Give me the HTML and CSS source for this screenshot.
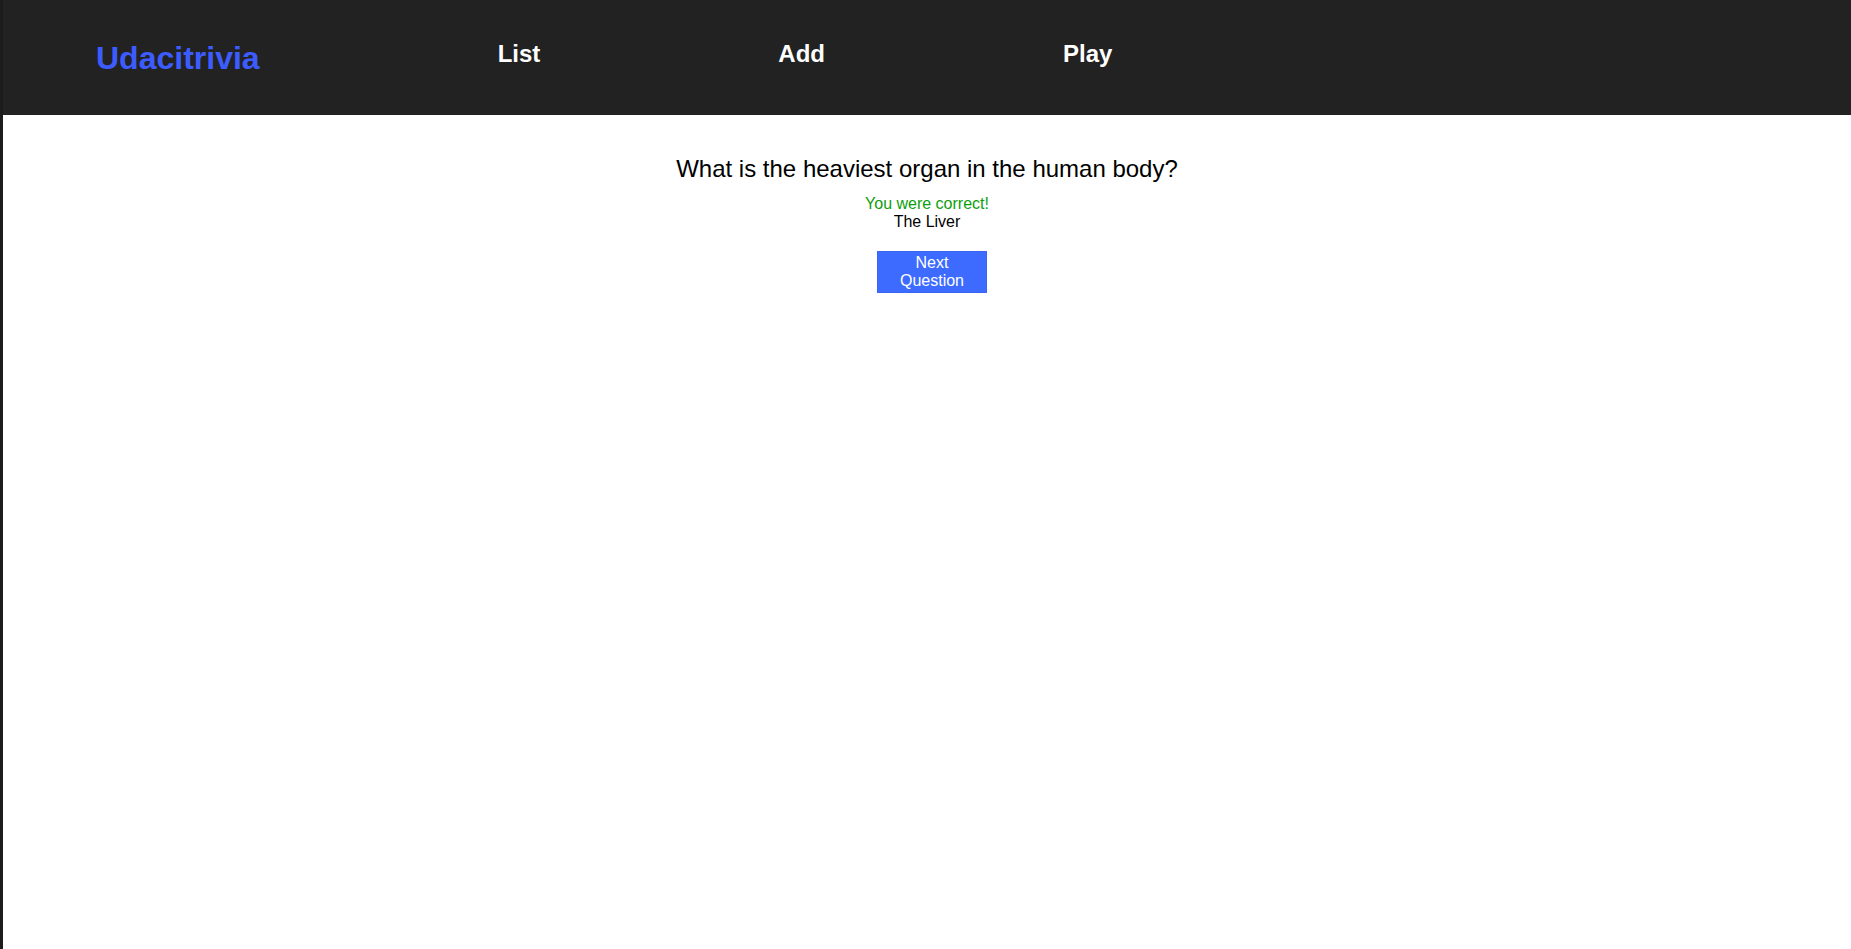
FILE: index.html
```html
<!DOCTYPE html>
<html lang="en">
<head>
<meta charset="utf-8">
<title>Udacitrivia</title>
<link rel="stylesheet" href="styles.css">
</head>
<body>
<div class="app">
  <header class="header">
    <h1 class="logo">Udacitrivia</h1>
    <nav class="nav">
      <h2 class="nav-item">List</h2>
      <h2 class="nav-item">Add</h2>
      <h2 class="nav-item">Play</h2>
    </nav>
  </header>
  <main class="content">
    <div class="quiz-play-holder">
      <div class="quiz-question">What is the heaviest organ in the human body?</div>
      <div class="quiz-answer correct">You were correct!</div>
      <div class="quiz-answer">The Liver</div>
      <button class="next-question">Next Question</button>
    </div>
  </main>
</div>
</body>
</html>
```
FILE: styles.css
```css
html, body {
  margin: 0;
  padding: 0;
  height: 100%;
}
body {
  background: #1c1c1c;
  font-family: "Liberation Sans", Arial, sans-serif;
  color: #000;
}
.app {
  margin-left: 3px;
  min-height: 100%;
  display: flex;
  flex-direction: column;
  background: #fff;
}
.header {
  height: 115px;
  box-sizing: border-box;
  background: #222222;
  display: flex;
  align-items: flex-start;
  padding: 40px 0 0 93px;
  gap: 238px;
}
.logo {
  margin: 0;
  font-size: 32px;
  font-weight: bold;
  color: #3d5cff;
}
.nav {
  display: flex;
  align-items: flex-start;
  gap: 238px;
}
.nav-item {
  margin: 0;
  font-size: 24px;
  font-weight: bold;
  color: #fff;
}
.content {
  flex: 1;
  background: #fff;
  padding: 40px 0 0 0;
}
.quiz-play-holder {
  display: flex;
  flex-direction: column;
  align-items: center;
  text-align: center;
}
.quiz-question {
  font-size: 24px;
  margin-bottom: 12px;
}
.quiz-answer {
  font-size: 16px;
}
.quiz-answer.correct {
  color: #0c9e0c;
}
.next-question {
  margin: 20px 0 0 10px;
  width: 110px;
  height: 42px;
  box-sizing: border-box;
  padding: 2px 4px;
  border: 1px solid #3b66f5;
  background: #3d6bff;
  color: #fff;
  font-family: "Liberation Sans", Arial, sans-serif;
  font-size: 16px;
  line-height: 18px;
}
```
